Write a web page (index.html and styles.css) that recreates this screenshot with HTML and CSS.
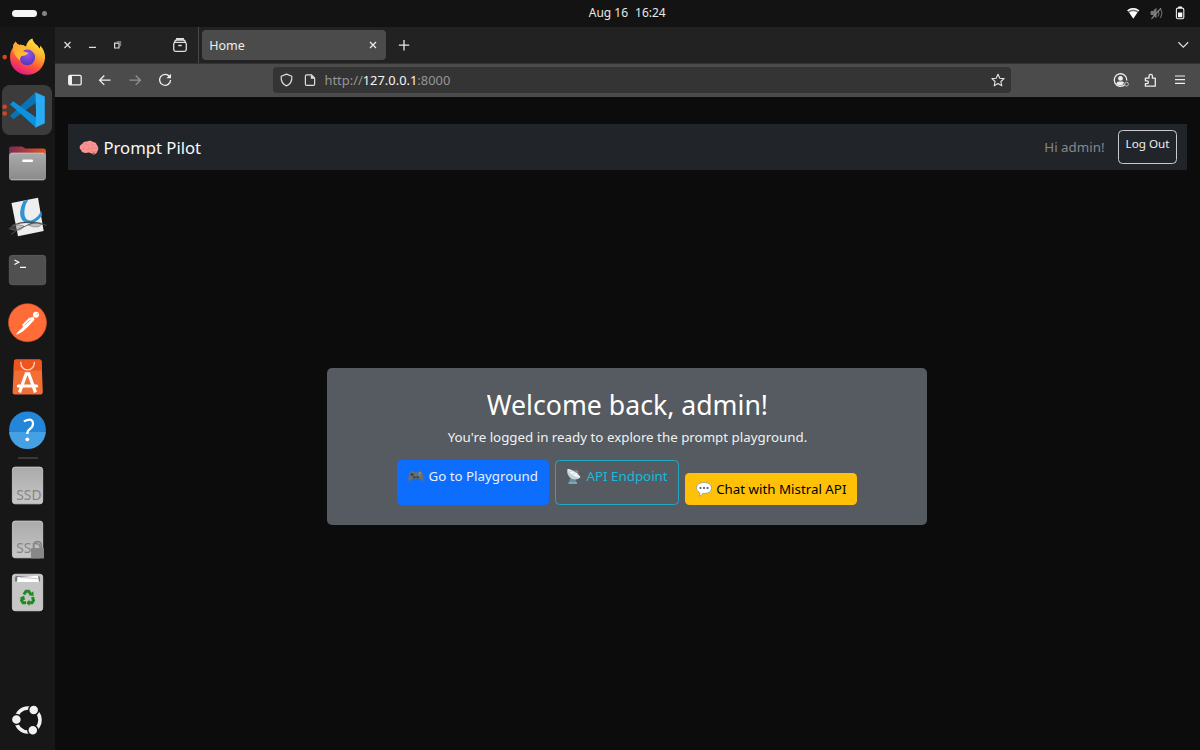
FILE: index.html
```html
<!DOCTYPE html>
<html lang="en">
<head>
<meta charset="utf-8">
<title>Home</title>
<link rel="stylesheet" href="styles.css">
</head>
<body>
<div class="desktop">
  <header class="topbar">
    <div class="workspaces"><span class="ws-active"></span><span class="ws-dot"></span></div>
    <div class="clock"><span>Aug 16</span><span>16:24</span></div>
    <svg class="tray" viewBox="1120 0 72 27">
      <path d="M1127.2 10.3Q1133.2 5.8 1139.3 10.3L1133.3 18.7Z" fill="#777"/>
      <path d="M1127.2 10.3Q1133.2 5.8 1139.3 10.3L1138.5 11.3Q1133.2 7.5 1128 11.3Z" fill="#fff"/>
      <path d="M1129.2 12.6Q1133.2 9.8 1137.3 12.6L1133.3 18.5Z" fill="#fff"/>
      <g stroke="#777" fill="none"><path d="M1151 11.5h2l3-3v9l-3-3h-2z" fill="#777"/><path d="M1158 10.5q2 3 0 6M1160.500 8.500q3 4.500 0 9.500"/><path d="M1151.500 18.800L1161 8.200" stroke="#8a8a8a" stroke-width="1.200"/></g>
      <rect x="1176.400" y="8.100" width="7.400" height="10.700" rx="1.500" fill="none" stroke="#eee" stroke-width="1.100"/>
      <path d="M1178.300 6.600h3.600v1.400h-3.600zM1178 12.600h4.300v4.700h-4.300z" fill="#fff"/>
    </svg>
  </header>
  <div class="workspace">
    <aside class="dock">
      <svg class="slot" viewBox="0 29.6 55 53.333">
        <defs>
          <linearGradient id="fox" x1=".8" y1="0" x2=".3" y2="1"><stop offset="0" stop-color="#fff044"/><stop offset=".35" stop-color="#ffb52d"/><stop offset=".65" stop-color="#ff5a36"/><stop offset="1" stop-color="#e4148a"/></linearGradient>
          <radialGradient id="globe" cx=".5" cy=".3" r=".8"><stop offset="0" stop-color="#9a52ee"/><stop offset="1" stop-color="#4836ae"/></radialGradient>
          <linearGradient id="tail" x1="0" y1="0" x2="1" y2="1"><stop offset="0" stop-color="#ff9d2b"/><stop offset="1" stop-color="#ffce3b"/></linearGradient>
        </defs>
        <circle cx="4.700" cy="56.700" r="2.300" fill="#d5451d"/>
        <path d="M13.500 44Q15 42.500 15.500 41Q17 44 19.500 44.500Q23 44 26 46Q27.500 39.500 32.500 38Q33 42 37.500 45L39.500 48Q40.500 46.500 40 45Q45.500 50 45 58C44 68 36 74.300 27.500 74.300C17.500 74.300 10 66.500 10 57C10 52 11.500 49 12.800 47.500Z" fill="url(#fox)"/>
        <circle cx="27.300" cy="57" r="7.800" fill="url(#globe)"/>
        <path d="M13.500 44L15.500 41Q17 44 19.500 44.500Q23.500 44 26 47Q25 50 22.500 50.500L28.500 52.500Q26 55.500 21.500 55.500Q19.500 57.500 20 60Q14 55 13 49Z" fill="url(#tail)"/>
      </svg>
      <div class="slot active"><svg class="slot-art" viewBox="0 82.933 55 53.333">
        <circle cx="4.700" cy="106.700" r="2.300" fill="#d5451d"/><circle cx="4.700" cy="113.400" r="2.300" fill="#d5451d"/>
        <path d="M10 115.700L35.500 92.200L36 102.500L13.300 119.300Z" fill="#0873b7"/>
        <path d="M10 104.200L13.200 101.300L36 117.400V127.500Z" fill="#0c91df"/>
        <path d="M35.300 92.200L44.800 96.500V123.300L35.300 127.800Q36 124 36 110Z" fill="#29acf5"/>
      </svg></div>
      <svg class="slot" viewBox="0 136.267 55 53.333">
        <defs><linearGradient id="fold"><stop stop-color="#7a2957"/><stop offset="1" stop-color="#e95420"/></linearGradient><linearGradient id="gray" x2="0" y2="1"><stop stop-color="#aaa"/><stop offset="1" stop-color="#8a8a8a"/></linearGradient></defs>
        <path d="M9 158V149Q9 146.700 11.500 146.700H22L25.500 148.800H43.500Q46 149 46 151.500V158Z" fill="url(#fold)"/>
        <rect x="9" y="153" width="37" height="27.500" rx="3.200" fill="url(#gray)"/><path d="M11 153.500H44M11 180H44" stroke="#c5c5c5" stroke-width=".7"/>
        <rect x="22.200" y="159.700" width="10.800" height="2.500" rx="1" fill="#fff"/>
      </svg>
      <svg class="slot" viewBox="0 189.600 55 53.333">
        <path d="M11.500 202.700L38 197.400L43.700 230.500L18 235.800Z" fill="#eee"/>
        <path d="M28.200 199.300L23.500 200.300Q17.500 213 22 219.500Q27 225 34 222Q39.500 219.500 42 214.500L41.200 210.500Q37 218.500 31 220Q25.500 220 24.500 214.500Q23.500 207 28.200 199.300Z" fill="#3193d3"/>
        <path d="M12 225Q28 219 43.500 224M27 225Q35 220 46.500 225" fill="none" stroke="#4a4a4a" stroke-width="1.100"/>
        <path d="M9 229Q14 222 24 225.500Q21 232 11 229M29 225Q36 220.500 42 223Q39 229 29 225" fill="#777" fill-opacity=".4" stroke="#777" stroke-width=".6"/><path d="M11 234Q18 228 27 225" stroke="#555" fill="none" stroke-width=".9"/>
      </svg>
      <svg class="slot" viewBox="0 242.933 55 53.333">
        <rect x="9.300" y="255.300" width="36.400" height="29.400" rx="3" fill="#505050" stroke="#666" stroke-width=".7"/>
        <path d="M14.500 260L18.700 262.200L14.500 264.400M20 267.400H26" fill="none" stroke="#fff" stroke-width="1.200"/>
      </svg>
      <svg class="slot" viewBox="0 296.267 55 53.333">
        <circle cx="27.500" cy="323" r="19" fill="#ff6c37" stroke="#e7562b" stroke-width=".6"/>
        <circle cx="36" cy="315" r="3" fill="#fff"/><path d="M33.500 317L29 318.200L22 325.300L23.300 327L16.500 333.500L16.500 335L22.500 332L28 327L34.500 320Z" fill="#fff"/><path d="M24.500 325.500L30.500 320M35.800 315L38 313.500" stroke="#ff6c37" stroke-width=".6"/>
      </svg>
      <svg class="slot" viewBox="0 349.600 55 53.333">
        <path d="M16 359.200H39.500Q41.500 359.200 41.600 361.200L42.800 391.500Q42.800 394 40.500 394H15Q12.500 394 12.600 391.500L14 361.200Q14 359.200 16 359.200Z" fill="#f16f37"/><path d="M16 359.200H39.500Q41.500 359.200 41.600 361.200L42 370H13.600L14 361.200Q14 359.200 16 359.200Z" fill="#ee541e"/>
        <path d="M20.700 361.500Q21 369.500 27.500 369.500Q34 369.500 34.500 361.500" fill="none" stroke="#ffd6c5" stroke-width="1.300"/>
        <path d="M19.500 392L26.200 373.500H28.800L35.500 392" fill="none" stroke="#fff" stroke-width="3.200"/><path d="M18.300 385.500H36.700" stroke="#fff" stroke-width="3" stroke-linecap="round"/>
      </svg>
      <svg class="slot" viewBox="0 402.933 55 53.333">
        <circle cx="27.500" cy="429.800" r="18.400" fill="#2486d9"/><path d="M9.100 432H45.800A18.400 18.400 0 0 1 9.100 432" fill="#45a1e3"/>
        <path d="M23.800 421.300Q33 416.800 33 423.800Q33 426.800 30 428.800Q27.200 430.800 27.300 434" fill="none" stroke="#fff" stroke-width="2.200"/><circle cx="27.300" cy="439.300" r="1.900" fill="#fff"/>
      </svg>
      <div class="dock-line"></div>
      <svg class="slot" viewBox="0 459.333 55 53.333">
        <defs><linearGradient id="drive" x2="0" y2="1"><stop stop-color="#aaa"/><stop offset="1" stop-color="#c7c7c7"/></linearGradient></defs>
        <rect x="12.400" y="467.400" width="30.300" height="36.800" rx="2.800" fill="url(#drive)" stroke="#ddd" stroke-width=".7"/><text class="ssd" x="16.300" y="500">SSD</text>
      </svg>
      <svg class="slot" viewBox="0 512.667 55 53.333">
        <rect x="12.400" y="520.700" width="30.300" height="36.800" rx="2.800" fill="url(#drive)" stroke="#ddd" stroke-width=".7"/><text class="ssd" x="16.300" y="553">SSD</text>
        <path d="M33.700 548V545Q33.700 541.300 37.500 541.300Q41.300 541.300 41.300 545V548" fill="none" stroke="#888" stroke-width="1.700"/><rect x="31" y="547.700" width="13" height="10.400" fill="#888"/>
      </svg>
      <svg class="slot" viewBox="0 566 55 53.333">
        <rect x="12.400" y="574.200" width="30.300" height="36.600" rx="2.800" fill="#c6c6c6" stroke="#e5e5e5" stroke-width=".7"/>
        <path d="M15 581.500V577.500Q15 576 17 576H38Q40 576 40 577.500V581.500Z" fill="#777"/><path d="M17 582L17.500 577L38 575.800L39 582Z" fill="#fff"/><path d="M20 577.500L37 578.500L38.500 580" stroke="#aaa" fill="none" stroke-width=".7"/>
        <g fill="none" stroke="#1f8a1f" stroke-width="3"><path d="M23.800 594.500L26 591.300H28.800L30.500 594"/><path d="M32.500 597L33.500 600.500L32 602.700H28.800"/><path d="M26 602.700H23L21.600 600.500L22.800 598"/></g>
        <path d="M28.500 595.300L33.500 596L33.500 591.300ZM29.500 599.500V606L26.300 602.700ZM19.300 598L24 595.700L25.300 600Z" fill="#1f8a1f"/>
      </svg>
      <svg class="slot launcher" viewBox="0 693.333 55 53.333">
        <circle cx="28" cy="720.300" r="12" fill="none" stroke="#f2f2f2" stroke-width="3.500"/>
        <g fill="#f2f2f2" stroke="#171717" stroke-width="1.500"><circle cx="16.400" cy="719.800" r="5"/><circle cx="33.700" cy="710.400" r="5"/><circle cx="32.800" cy="730.600" r="5"/></g>
      </svg>
    </aside>
    <section class="browser">
      <div class="tabbar">
        <svg class="win-icons" viewBox="55 27 144 36"><g fill="none" stroke="#ddd" stroke-width="1.200"><path d="M64.500 42L70.500 48M70.500 42L64.500 48M89 47.300H96"/><path d="M116.800 41.700H120.600V46.200" stroke="#777"/><path d="M114.600 43.100H119V48H114.600Z"/><rect x="173.700" y="42.400" width="12.600" height="9" rx="1.800" stroke-width="1.300"/><path d="M174.500 42Q175 40 177 40H183Q185 40 185.500 42M176 38.700H184M178.300 45.500H181.700" stroke-width="1.300"/></g><path d="M198.500 27V63" stroke="#494949"/></svg>
        <div class="tab"><span class="tab-title">Home</span><svg class="tab-close" viewBox="0 0 8 8"><path d="M1 1L7 7M7 1L1 7" stroke="#eee" stroke-width="1.200"/></svg></div>
        <svg class="icon plus" viewBox="394.500 35 20 20"><path d="M399.400 45.200H409.700M404.500 40V50.400" stroke="#e8e8e8" stroke-width="1.300"/></svg>
        <svg class="icon chev" viewBox="1173 35 20 20"><path d="M1178.400 42.300L1183.300 47.100L1188.200 42.300" fill="none" stroke="#ddd" stroke-width="1.200"/></svg>
      </div>
      <div class="navbar">
        <svg class="icon" viewBox="65 70 20 20"><rect x="68.700" y="75.400" width="12.500" height="9.400" rx="1.300" fill="none" stroke="#f0f0f0" stroke-width="1.300"/><path d="M69 75.500H72V84.800H69Z" fill="#f0f0f0"/></svg>
        <svg class="icon" viewBox="95 70 20 20"><path d="M110.500 80.200H100M104.300 75.500L99.600 80.200L104.300 84.900" fill="none" stroke="#f0f0f0" stroke-width="1.300"/></svg>
        <svg class="icon" viewBox="125 70 20 20"><path d="M129.500 80.200H140M135.700 75.500L140.400 80.200L135.700 84.900" fill="none" stroke="#929292" stroke-width="1.300"/></svg>
        <svg class="icon" viewBox="155 70 20 20"><path d="M169.500 76.500A5.500 5.500 0 1 0 170.600 80" fill="none" stroke="#f0f0f0" stroke-width="1.300"/><path d="M171 73.700V78.300H166.400Z" fill="#f0f0f0"/></svg>
        <div class="urlbar">
          <svg class="icon" viewBox="276 70 20 20"><path d="M286.500 74.100L291.800 76.200C292.200 80.800 290 84.300 286.500 85.900C283 84.300 280.800 80.800 281.200 76.200Z" fill="none" stroke="#ddd" stroke-width="1.200" stroke-linejoin="round"/></svg>
          <svg class="icon page" viewBox="300 70 20 20"><path d="M306.500 74.800H311.500L314.600 78V84.200Q314.600 85.300 313.500 85.300H306.500Q305.400 85.300 305.400 84.200V75.900Q305.400 74.800 306.500 74.800Z" fill="none" stroke="#ddd" stroke-width="1.200"/><path d="M310.800 74.500L315 78.800H310.800Z" fill="#ddd"/></svg>
          <span class="url">http://<b>127.0.0.1</b>:8000</span>
          <svg class="icon star" viewBox="988 70 20 20"><path d="M998 74.200L999.800 78.200L1004.100 78.600L1000.900 81.500L1001.800 85.800L998 83.600L994.200 85.800L995.100 81.500L991.900 78.600L996.200 78.200Z" fill="none" stroke="#e5e5e5" stroke-width="1.100" stroke-linejoin="round"/></svg>
        </div>
        <svg class="icon account" viewBox="1109.500 70 20 20"><path d="M1124.500 84.500A6.300 6.300 0 1 1 1126.300 80.500" fill="none" stroke="#eee" stroke-width="1.300"/><circle cx="1120" cy="78.400" r="2.400" fill="#eee"/><path d="M1115.800 84Q1116.200 81.600 1118.500 81.600H1122Q1123 81.600 1123.500 82.400L1122.500 84.500Q1119 86.500 1115.800 84Z" fill="#eee"/><circle cx="1126" cy="84.200" r="1.900" fill="none" stroke="#bbb"/></svg>
        <svg class="icon" viewBox="1140 70 20 20"><path d="M1145.400 78.200H1149V76A1.700 1.700 0 0 1 1152.400 76V78.200H1155.300V86.200H1145.400V83.600H1147A1.400 1.400 0 0 0 1147 80.800H1145.400Z" fill="none" stroke="#eee" stroke-width="1.300" stroke-linejoin="round"/></svg>
        <svg class="icon" viewBox="1170 70 20 20"><path d="M1175 76H1185M1175 79.700H1185M1175 83.400H1185" stroke="#eee" stroke-width="1.200"/></svg>
      </div>
      <main class="page-body">
        <nav class="site-nav">
          <div class="brand">
            <svg class="brain" viewBox="0 0 20 16"><path d="M2 10C-.5 8 .8 4.500 3.200 4C4 1.800 6.700 1.400 8 1.500C10 .3 12.500.8 13.500 1.800C16 2 17.500 3.500 17.800 5C19.800 7 19.600 10 18.300 11.200C18 13.500 16 14.800 13.800 14.300C12.500 13.800 11.500 12.500 9.500 12.500C7 13.300 3 13.300 2 10Z" fill="#fa9493"/><path d="M3 9C5 10 6 7 4.500 6M5.500 4C8 3 8 6 10 5M7 9C10 11 11 8 9 7M12 3C12 6 14 4 15 6M12 9C15 7 16 9 18 8M11 11C13 10 15 13 17 11" fill="none" stroke="#e07a7e" stroke-width=".7"/><path d="M12.500 13.500Q14 12 16.500 13Q15.500 15 13.800 14.300Z" fill="#b9545b"/></svg>
            <span>Prompt Pilot</span>
          </div>
          <div class="session"><span class="hi">Hi admin!</span><a class="btn logout">Log Out</a></div>
        </nav>
        <div class="center">
          <div class="card">
            <h2>Welcome back, admin!</h2>
            <p>You're logged in ready to explore the prompt playground.</p>
            <div class="actions">
              <a class="btn primary"><svg class="emoji" viewBox="0 0 16 16"><path d="M3.500 3.300H6L6.800 4.300H9.200L10 3.300H12.500C14.500 4 16 9 15.600 12.500C14.800 14 12.800 12.500 11.500 10.800H4.500C3.200 12.500 1.200 14 .4 12.500C0 9 1.500 4 3.500 3.300Z" fill="#6a6e70"/><path d="M4.100 5V8.200M2.500 6.600H5.700" stroke="#303436" stroke-width="1"/><circle cx="6.300" cy="9.300" r="1.200" fill="#3d4244"/><circle cx="9.700" cy="9.300" r="1.200" fill="#3d4244"/><circle cx="12" cy="5.100" r=".8" fill="#f5ad35"/><circle cx="13.500" cy="6.600" r=".8" fill="#d84a3d"/><circle cx="10.500" cy="6.600" r=".8" fill="#3b91db"/><circle cx="12" cy="8.100" r=".8" fill="#57a957"/></svg><span>Go to Playground</span></a>
              <a class="btn info"><svg class="emoji" viewBox="0 0 16 16"><path d="M5 8L3 14.500H10.500L9 10" fill="#6b8da0"/><path d="M1.500 1C2.500 1 13.500 7.500 14.300 9.500C11.500 12.500 5.500 12 3 8.500C1 6 .8 3 1.500 1Z" fill="#c3d3d8"/><path d="M1.500 1C5 .8 13.500 5.500 14.300 9.500C10 10 3 5.500 1.500 1Z" fill="#f3f7f8"/><path d="M7 6.500L11.500 3M3 3L11.500 3L12 8" fill="none" stroke="#a8bbc3" stroke-width=".6"/><circle cx="11.700" cy="2.900" r=".9" fill="#d65347"/><path d="M2.500 15H11" stroke="#8ebdcb" stroke-width="1.500"/></svg><span>API Endpoint</span></a>
              <a class="btn warning"><svg class="emoji" viewBox="0 0 16 16"><path d="M8 1.500C12.500 1.500 15.600 3.800 15.600 7C15.600 10.300 12.500 12.500 8 12.500L6.700 12.400Q5.500 15 2.800 15.200Q4.300 13.500 3.700 11.500Q.4 10 .4 7C.4 3.800 3.500 1.500 8 1.500Z" fill="#fff" stroke="#78909c" stroke-width=".7"/><g fill="#455a64"><circle cx="4.500" cy="7" r="1.100"/><circle cx="8" cy="7" r="1.100"/><circle cx="11.500" cy="7" r="1.100"/></g></svg><span>Chat with Mistral API</span></a>
            </div>
          </div>
        </div>
      </main>
    </section>
  </div>
</div>
</body>
</html>
```
FILE: styles.css
```css
* { box-sizing: border-box; }
body { margin: 0; background: #0c0c0c; color: #eee; font: 13.333px/20px "Noto Sans", sans-serif; }
svg { display: block; flex: none; }
.desktop { width: 1200px; height: 750px; overflow: hidden; display: flex; flex-direction: column; }
.topbar { height: 27px; flex: none; background: #131313; display: grid; grid-template-columns: 1fr auto 1fr; align-items: center; padding-left: 12px; padding-right: 8px; }
.workspaces { display: flex; align-items: center; gap: 5px; }
.ws-active { width: 25px; height: 7px; border-radius: 4px; background: #f5f5f5; }
.ws-dot { width: 5px; height: 5px; border-radius: 50%; background: #858585; }
.clock { display: flex; gap: 7px; font-size: 12px; color: #e8e8e8; margin-left: 50.500px; padding-bottom: 1px; }
.tray { width: 72px; height: 27px; justify-self: end; }
.workspace { flex: 1; display: flex; min-height: 0; }
.dock { width: 55px; flex: none; background: #171717; padding: 2.6px 0 3.333px; display: flex; flex-direction: column; }
.slot { width: 55px; height: 53.333px; flex: none; }
.active { padding: 2px 3px 1.400px 2px; }
.active::before { content: ""; display: block; height: 50px; border-radius: 8px; background: #3c3c3c; }
.slot-art { width: 55px; height: 53.333px; margin: -52px 0 0 -2px; position: relative; }
.dock-line { height: 1.500px; width: 20px; margin: .8px 0 .8px 17.500px; background: #393939; flex: none; }
.ssd { font: 13.800px "Noto Sans", sans-serif; fill: #858585; }
.launcher { margin-top: auto; }
.browser { flex: 1; display: flex; flex-direction: column; min-width: 0; }
.tabbar { height: 36.500px; background: #222; display: flex; align-items: center; border-bottom: 1px solid #333; flex: none; }
.win-icons { width: 144px; height: 36px; }
.tab { width: 184px; height: 30px; margin-left: 3.300px; padding: 0 9px 0 7px; border-radius: 4px; background: #4b4b4b; display: flex; align-items: center; justify-content: space-between; font-size: 12.500px; }
.tab-title { padding-top: 2px; }
.tab-close { width: 8px; height: 8px; }
.icon { width: 20px; height: 20px; }
.plus { margin-left: 8px; }
.chev { margin-left: auto; margin-right: 7px; }
.navbar { height: 33.500px; background: #4b4b4b; padding: 0 10px; display: flex; align-items: center; gap: 10px; flex: none; }
.urlbar { width: 738px; height: 26px; margin-left: 88px; border-radius: 4px; padding: 0 3px; background: #343434; display: flex; align-items: center; }
.page { margin-left: 4px; }
.url { margin-left: 4.500px; font-size: 12.900px; color: #969696; }
.url b { color: #f5f5f5; font-weight: 400; }
.star { margin-left: auto; }
.account { margin-left: 89px; }
.page-body { flex: 1; background: #0c0c0c; padding: 27px 13px 0; display: flex; flex-direction: column; }
.site-nav { height: 46px; background: #212529; display: flex; align-items: center; justify-content: space-between; padding: 0 10px 0 11px; }
.brand { display: flex; align-items: center; gap: 4.500px; padding-top: 1px; font-size: 16.667px; color: #f8f9fa; }
.brain { width: 20px; height: 16px; }
.session { display: flex; align-items: center; gap: 13.500px; }
.hi { color: #85888b; }
.btn { border: 1px solid transparent; border-radius: 4.500px; font-size: 13.333px; line-height: 20px; white-space: nowrap; }
.logout { width: 59px; height: 34px; padding-top: 3px; border-color: #c8cacc; font-size: 11.667px; text-align: center; }
.center { padding: 198.400px 13px 0 0; display: flex; justify-content: center; }
.card { width: 600px; height: 157px; margin-left: 12.900px; padding-top: 20.500px; border-radius: 5px; background: #555b60; text-align: center; }
.card h2 { margin: 0; font-size: 26.667px; line-height: 32px; font-weight: 400; color: #fff; }
.card p { margin: 6.200px 0 13px; line-height: 20px; color: #f1f1f1; }
.actions { display: flex; justify-content: center; align-items: flex-end; gap: 6.500px; }
.actions .btn { display: flex; align-items: center; height: 45px; padding: 5px 10px 18px; gap: 4px; }
.emoji { width: 16px; height: 16px; }
.actions .primary { background: #0d6efd; color: #e8f0ff; }
.actions .info { border-color: #1fa9c3; color: #12bbdc; }
.actions .warning { background: #ffc107; color: #000; height: 32px; padding-bottom: 5px; }
```
